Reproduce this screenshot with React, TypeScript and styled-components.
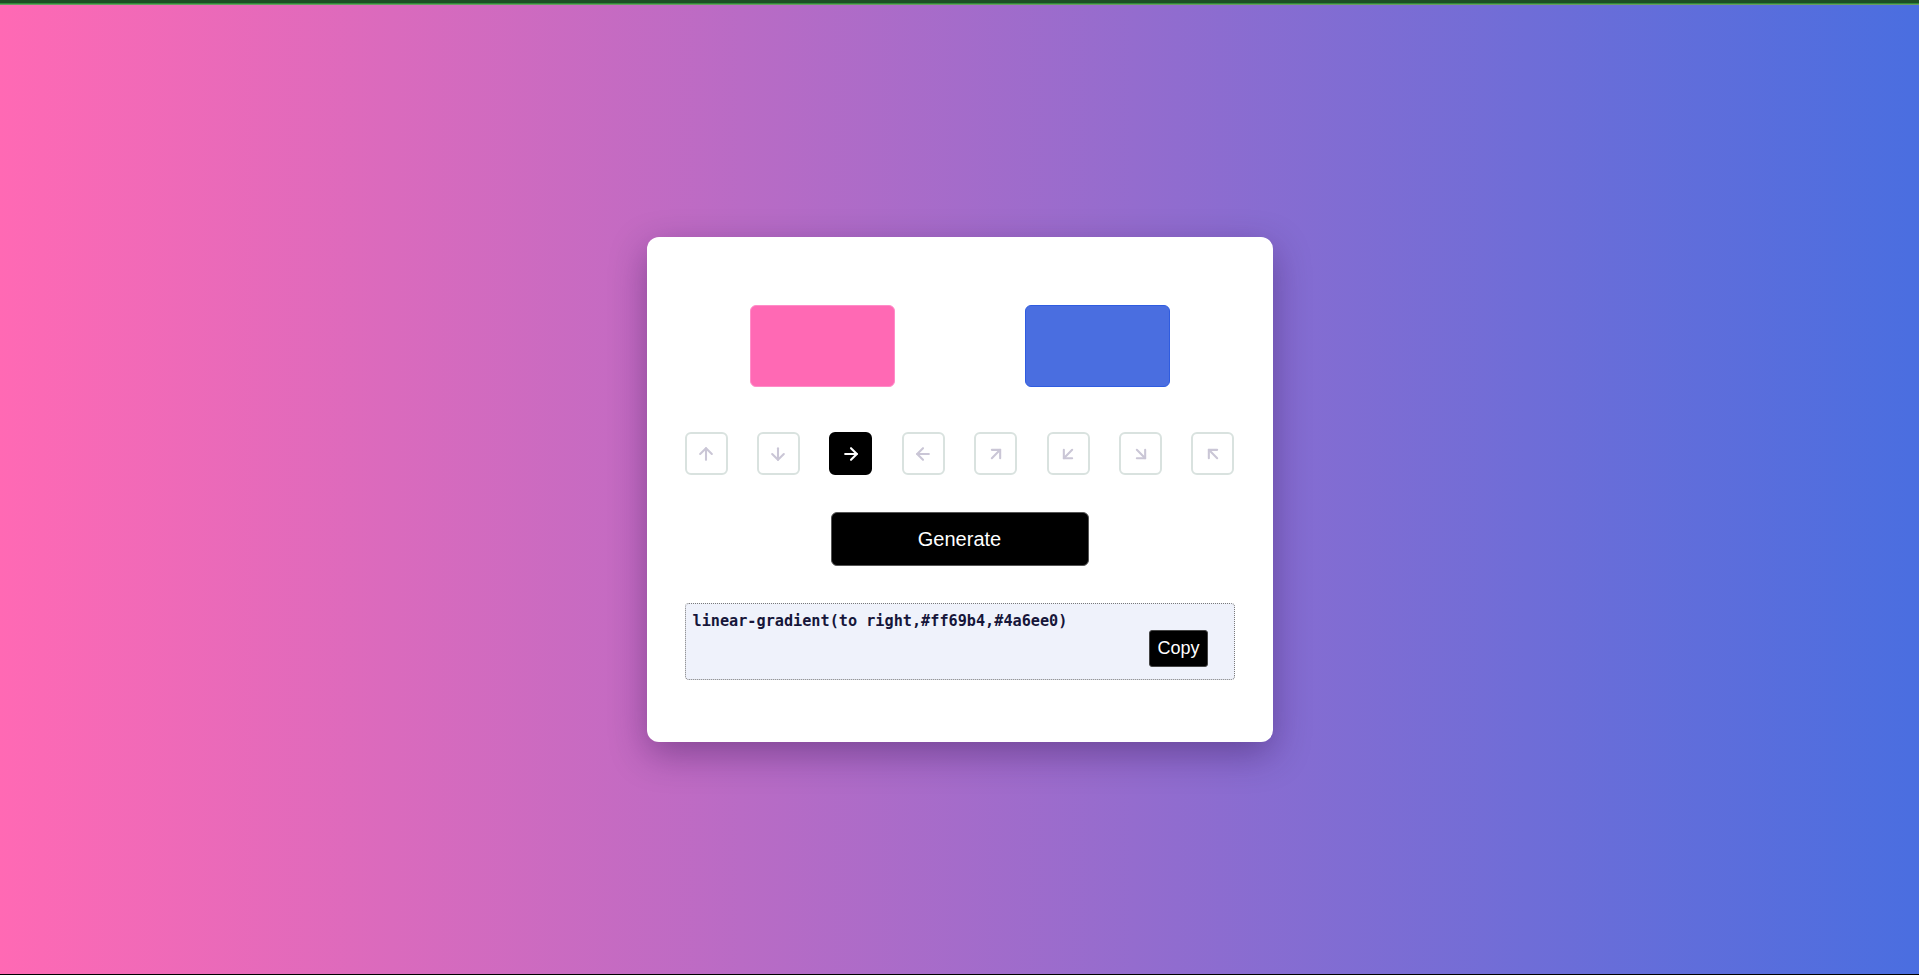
import React, { useState } from "react";
import styled, { createGlobalStyle } from "styled-components";
import {
  ArrowUp,
  ArrowDown,
  ArrowRight,
  ArrowLeft,
  ArrowUpRight,
  ArrowDownLeft,
  ArrowDownRight,
  ArrowUpLeft,
} from "lucide-react";

const GlobalStyle = createGlobalStyle`
  html, body { margin: 0; padding: 0; }
  body { font-family: "Liberation Sans", Arial, sans-serif; }
  * { box-sizing: border-box; }
`;

const Page = styled.div`
  display: flex;
  flex-direction: column;
  height: 975px;
  overflow: hidden;
`;

const TopBar = styled.div`
  height: 5px;
  flex: 0 0 5px;
  background: linear-gradient(to bottom, #1d4f24 0, #1d4f24 3px, #2f8a3c 3px, #2f8a3c 4px, #6a9a60 4px);
`;

const BottomLine = styled.div`
  height: 1px;
  flex: 0 0 1px;
  background: #000;
`;

const Main = styled.main`
  flex: 1;
  display: flex;
  align-items: center;
  justify-content: center;
  background: linear-gradient(to right, #ff69b4, #4a6ee0);
`;

const Card = styled.div`
  width: 626px;
  background: #fff;
  border-radius: 12px;
  padding: 68px 38px 62px;
  box-shadow: 0 12px 36px rgba(40, 10, 70, 0.38);
  display: flex;
  flex-direction: column;
`;

const SwatchRow = styled.div`
  display: flex;
  justify-content: space-around;
`;

const Swatch = styled.div<{ $color: string; $border: string }>`
  width: 145px;
  height: 82px;
  border-radius: 6px;
  background: ${(p) => p.$color};
  border: 1px solid ${(p) => p.$border};
`;

const DirRow = styled.div`
  display: flex;
  justify-content: space-between;
  margin-top: 45px;
`;

const DirButton = styled.button<{ $active: boolean }>`
  width: 43px;
  height: 43px;
  padding: 0;
  border-radius: 6px;
  border: 2px solid ${(p) => (p.$active ? "#000" : "#d9e2df")};
  background: ${(p) => (p.$active ? "#000" : "#fff")};
  color: ${(p) => (p.$active ? "#fff" : "#cac6d6")};
  display: flex;
  align-items: center;
  justify-content: center;
  cursor: pointer;
`;

const GenerateButton = styled.button`
  align-self: center;
  margin-top: 37px;
  width: 258px;
  height: 54px;
  border: 1px solid #555;
  border-radius: 6px;
  background: #000;
  color: #fff;
  font-family: "Liberation Sans", Arial, sans-serif;
  font-size: 20px;
  cursor: pointer;
`;

const OutputBox = styled.div`
  margin-top: 37px;
  height: 77px;
  background: #eff2fb;
  border: 1px dotted #7a7a7a;
  border-radius: 4px;
  padding: 9px 26px 0 7px;
  display: flex;
  flex-direction: column;
`;

const Code = styled.div`
  font-family: "DejaVu Sans Mono", "Liberation Mono", monospace;
  font-weight: bold;
  font-size: 15.2px;
  line-height: 17px;
  color: #16163a;
`;

const CopyButton = styled.button`
  align-self: flex-end;
  height: 37px;
  padding: 0 7px;
  border: 1px solid #444;
  border-radius: 3px;
  background: #000;
  color: #fff;
  font-family: "Liberation Sans", Arial, sans-serif;
  font-size: 18px;
  cursor: pointer;
`;

const directions = [
  { key: "top", Icon: ArrowUp },
  { key: "bottom", Icon: ArrowDown },
  { key: "right", Icon: ArrowRight },
  { key: "left", Icon: ArrowLeft },
  { key: "top right", Icon: ArrowUpRight },
  { key: "bottom left", Icon: ArrowDownLeft },
  { key: "bottom right", Icon: ArrowDownRight },
  { key: "top left", Icon: ArrowUpLeft },
];

export default function App() {
  const [dir, setDir] = useState("right");
  const c1 = "#ff69b4";
  const c2 = "#4a6ee0";
  return (
    <>
      <GlobalStyle />
      <Page>
        <TopBar />
        <Main>
          <Card>
            <SwatchRow>
              <Swatch $color={c1} $border="#ff8cc8" />
              <Swatch $color={c2} $border="#2f5ce0" />
            </SwatchRow>
            <DirRow>
              {directions.map(({ key, Icon }) => (
                <DirButton key={key} $active={dir === key} onClick={() => setDir(key)}>
                  <Icon size={20} strokeWidth={2.5} />
                </DirButton>
              ))}
            </DirRow>
            <GenerateButton>Generate</GenerateButton>
            <OutputBox>
              <Code>{`linear-gradient(to ${dir},${c1},${c2})`}</Code>
              <CopyButton>Copy</CopyButton>
            </OutputBox>
          </Card>
        </Main>
        <BottomLine />
      </Page>
    </>
  );
}
